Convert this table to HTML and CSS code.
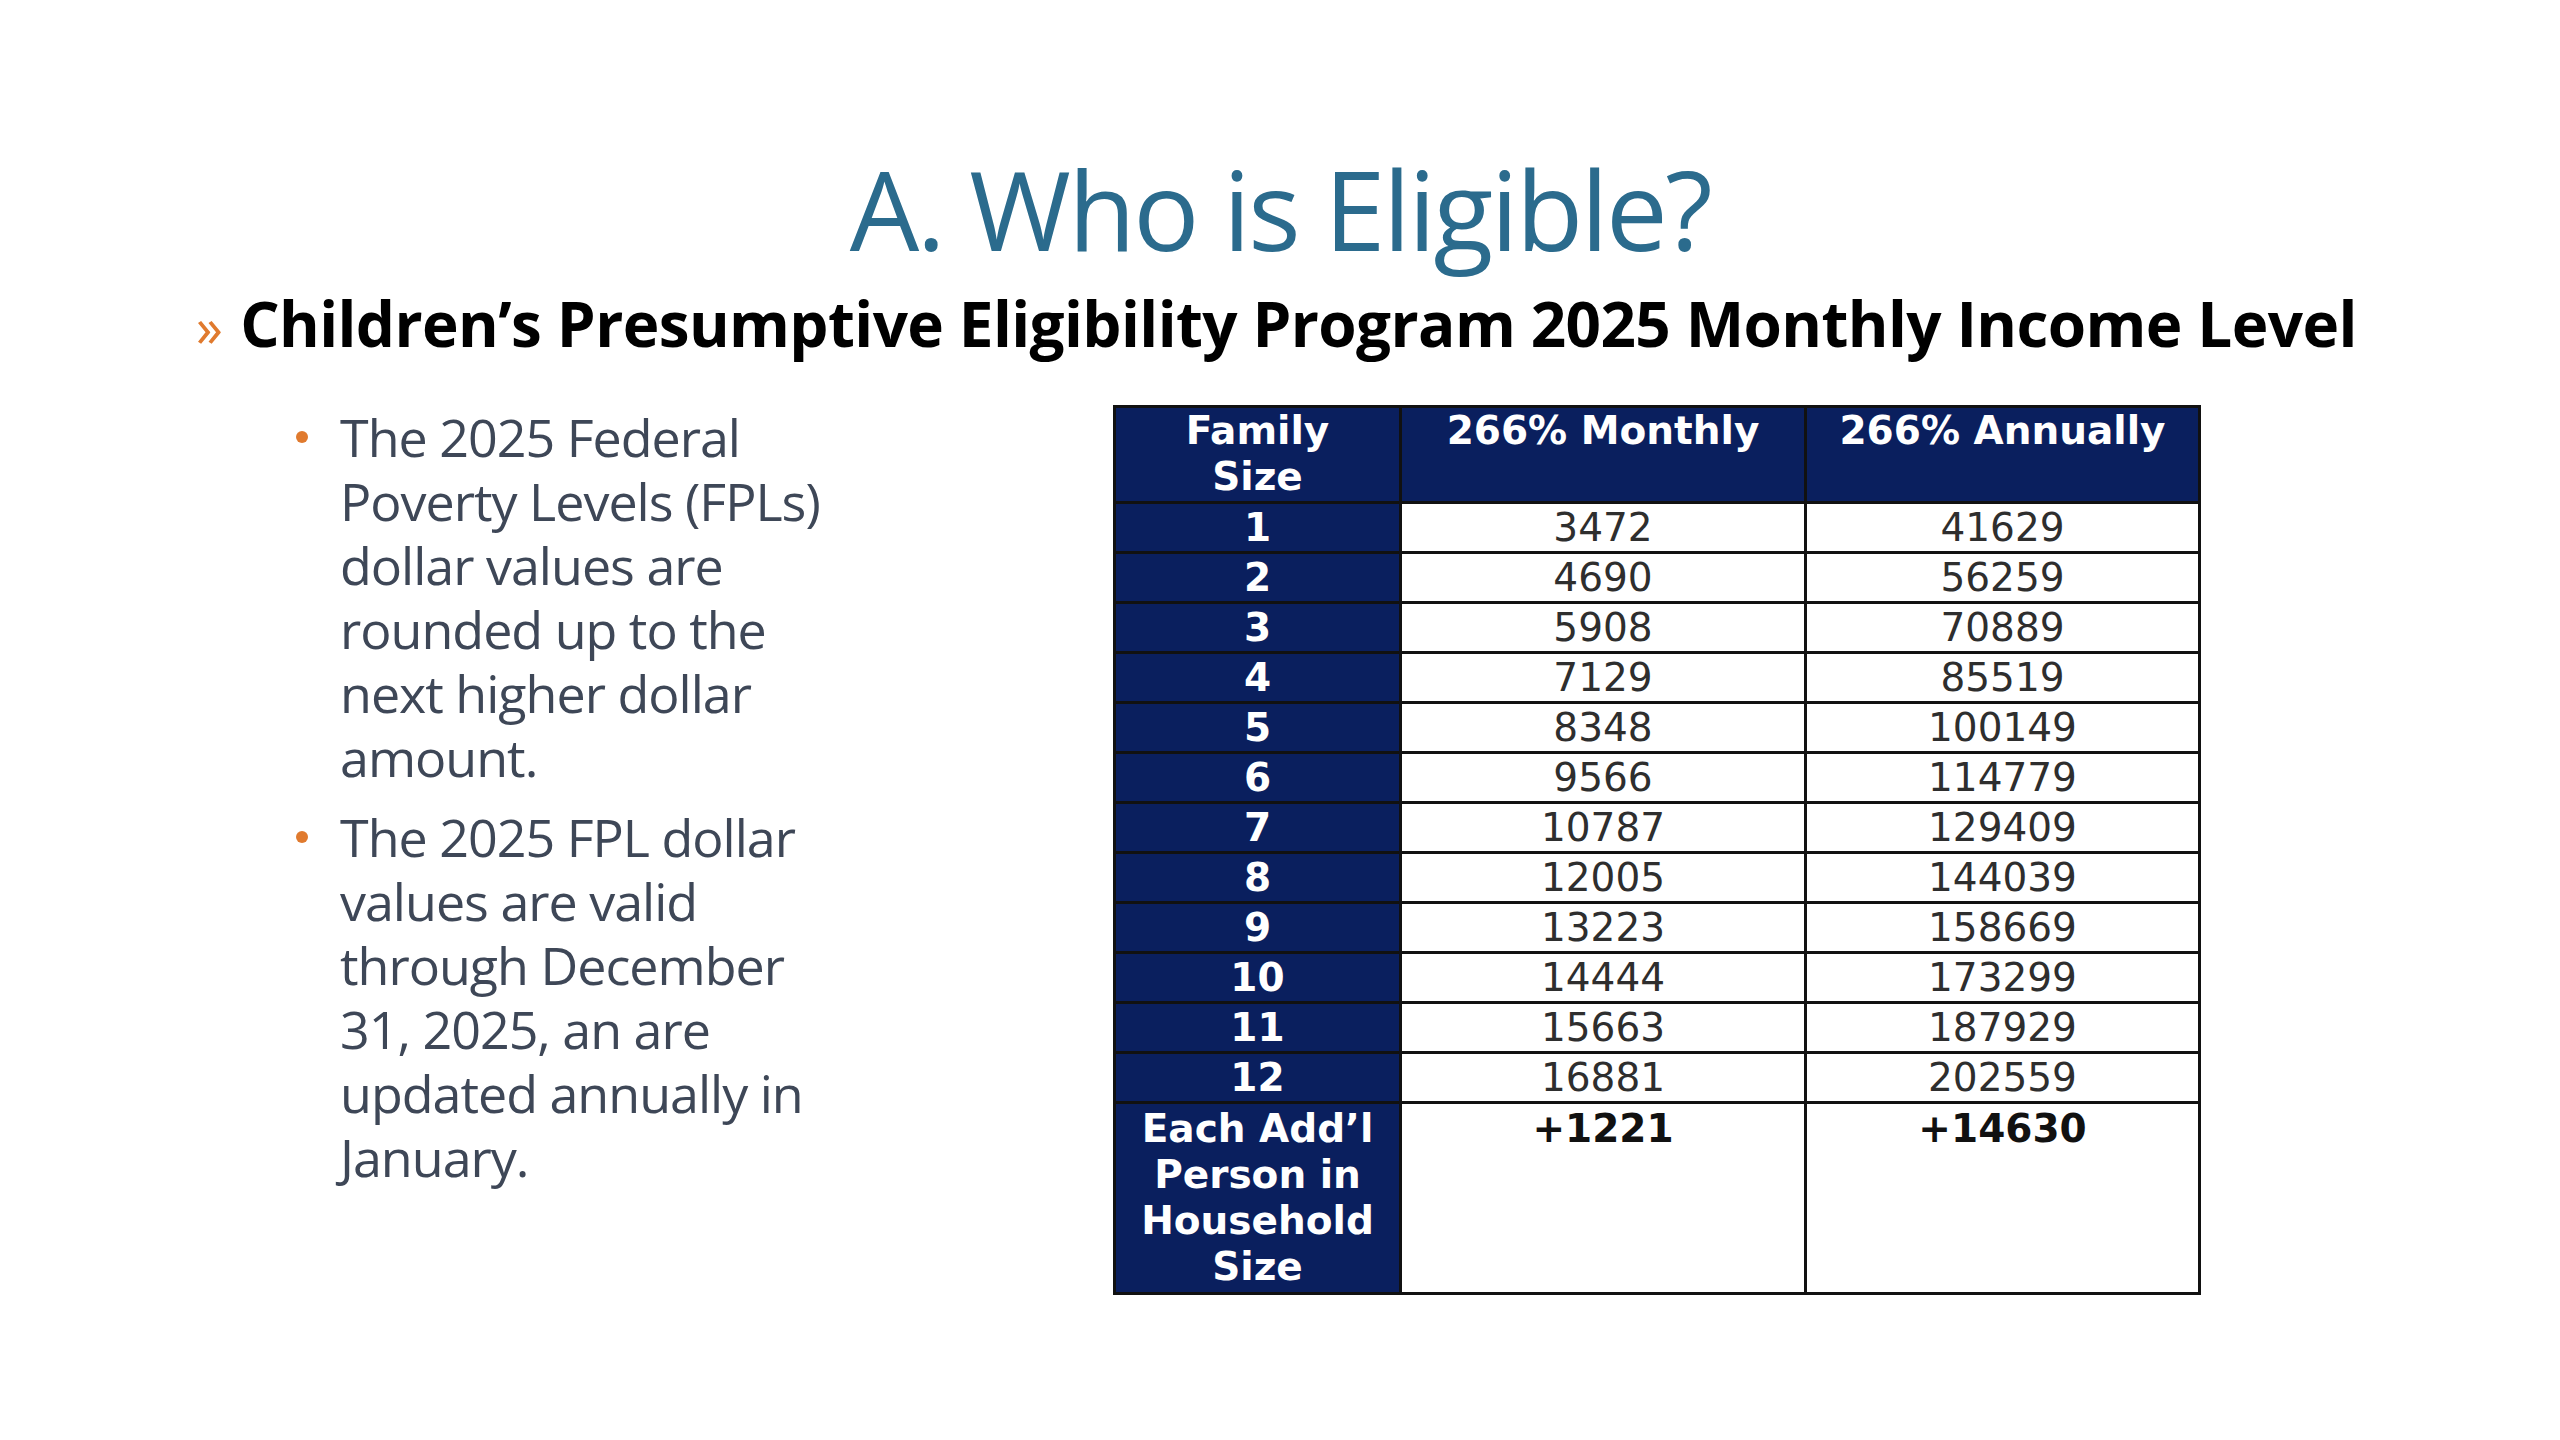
FILE: index.html
```html
<!DOCTYPE html>
<html lang="en">
<head>
<meta charset="utf-8">
<title>A. Who is Eligible?</title>
<link rel="stylesheet" href="styles.css">
</head>
<body>
<div class="slide">
  <h1 class="title">A. Who is Eligible?</h1>
  <h2 class="subtitle"><span class="chev">»</span>Children’s Presumptive Eligibility Program 2025 Monthly Income Level</h2>
  <div class="content">
    <ul class="bullets">
      <li>The 2025 Federal<br>Poverty Levels (FPLs)<br>dollar values are<br>rounded up to the<br>next higher dollar<br>amount.</li>
      <li>The 2025 FPL dollar<br>values are valid<br>through December<br>31, 2025, an are<br>updated annually in<br>January.</li>
    </ul>
    <table class="fpl">
      <colgroup>
        <col class="c1"><col class="c2"><col class="c3">
      </colgroup>
      <thead>
        <tr class="head"><th>Family<br>Size</th><th>266% Monthly</th><th>266% Annually</th></tr>
      </thead>
      <tbody>
        <tr><th>1</th><td>3472</td><td>41629</td></tr>
        <tr><th>2</th><td>4690</td><td>56259</td></tr>
        <tr><th>3</th><td>5908</td><td>70889</td></tr>
        <tr><th>4</th><td>7129</td><td>85519</td></tr>
        <tr><th>5</th><td>8348</td><td>100149</td></tr>
        <tr><th>6</th><td>9566</td><td>114779</td></tr>
        <tr><th>7</th><td>10787</td><td>129409</td></tr>
        <tr><th>8</th><td>12005</td><td>144039</td></tr>
        <tr><th>9</th><td>13223</td><td>158669</td></tr>
        <tr><th>10</th><td>14444</td><td>173299</td></tr>
        <tr><th>11</th><td>15663</td><td>187929</td></tr>
        <tr><th>12</th><td>16881</td><td>202559</td></tr>
        <tr class="extra"><th>Each Add’l<br>Person in<br>Household<br>Size</th><td>+1221</td><td>+14630</td></tr>
      </tbody>
    </table>
  </div>
</div>
</body>
</html>
```

FILE: styles.css
```css
html, body {
  margin: 0;
  padding: 0;
  background: #ffffff;
}

.slide {
  width: 2560px;
  height: 1440px;
  box-sizing: border-box;
  padding-top: 138px;
  font-family: "Open Sans", "Noto Sans", sans-serif;
}

.title {
  margin: 0;
  text-align: center;
  font-weight: 400;
  font-size: 110px;
  line-height: 140px;
  letter-spacing: -2.5px;
  color: #2b6b8d;
}

.subtitle {
  margin: 0;
  padding-left: 196px;
  font-weight: 700;
  font-size: 62px;
  line-height: 90px;
  letter-spacing: -0.6px;
  color: #000000;
  display: flex;
  align-items: baseline;
}

.chev {
  color: #e07a2e;
  font-weight: 400;
  font-size: 54px;
  margin-right: 18px;
}

.content {
  display: flex;
  align-items: flex-start;
  margin-top: 18px;
}

.bullets {
  list-style: none;
  margin: 0;
  padding: 0 0 0 340px;
  width: 773px;
  box-sizing: content-box;
  color: #3e4757;
  font-size: 52px;
  line-height: 64px;
  letter-spacing: -1px;
}

.bullets li {
  position: relative;
  margin-top: 16px;
}

.bullets li::before {
  content: "";
  position: absolute;
  left: -44px;
  top: 26px;
  width: 12px;
  height: 12px;
  border-radius: 50%;
  background: #e07a2e;
}

.fpl {
  border-collapse: collapse;
  table-layout: fixed;
  width: 1085px;
  margin-top: 16px;
  font-family: "DejaVu Sans", "Liberation Sans", sans-serif;
  font-size: 39px;
  border: 3px solid #111111;
}

.c1 { width: 286px; }
.c2 { width: 405px; }
.c3 { width: 394px; }

.fpl th,
.fpl td {
  border: 3px solid #111111;
  padding: 0;
  text-align: center;
  height: 47px;
  line-height: 47px;
}

.fpl th {
  background: #0a1f5e;
  color: #ffffff;
  font-weight: 700;
}

.fpl td {
  color: #2e2e2e;
  font-weight: 400;
}

.fpl .head th {
  height: 93px;
  vertical-align: top;
  line-height: 46px;
}

.fpl .extra th,
.fpl .extra td {
  height: 186px;
  vertical-align: top;
  line-height: 46px;
}

.fpl .extra th {
  padding-top: 2px;
}

.fpl .extra td {
  font-weight: 700;
  color: #111111;
  padding-top: 2px;
}
```
